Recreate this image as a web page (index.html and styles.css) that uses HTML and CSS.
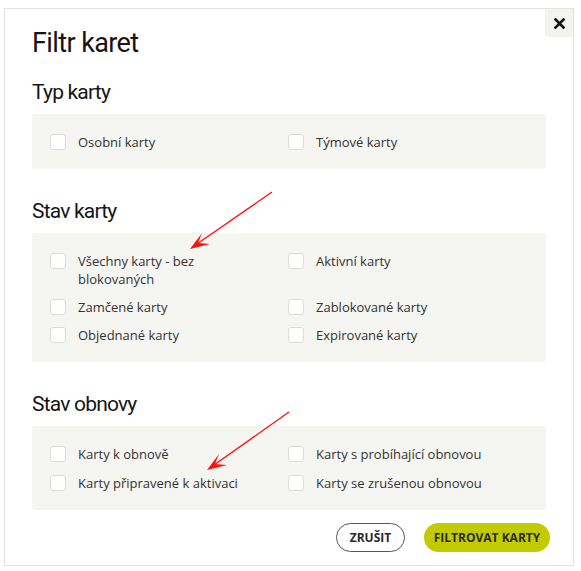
FILE: index.html
```html
<!DOCTYPE html>
<html lang="cs">
<head>
<meta charset="utf-8">
<title>Filtr karet</title>
<link rel="stylesheet" href="styles.css">
</head>
<body>
<div class="modal">
  <button class="close" aria-label="Zavřít">
    <svg width="11" height="11" viewBox="0 0 11 11"><path d="M1.5 1.5 L9.5 9.5 M9.5 1.5 L1.5 9.5" stroke="#111" stroke-width="2.6" stroke-linecap="square"/></svg>
  </button>
  <h1 class="title">Filtr karet</h1>

  <h2 class="section-title first">Typ karty</h2>
  <div class="panel">
    <label class="item"><span class="box"></span><span class="text">Osobní karty</span></label>
    <label class="item"><span class="box"></span><span class="text">Týmové karty</span></label>
  </div>

  <h2 class="section-title">Stav karty</h2>
  <div class="panel">
    <label class="item"><span class="box"></span><span class="text narrow">Všechny karty - bez blokovaných</span></label>
    <label class="item"><span class="box"></span><span class="text">Aktivní karty</span></label>
    <label class="item"><span class="box"></span><span class="text">Zamčené karty</span></label>
    <label class="item"><span class="box"></span><span class="text">Zablokované karty</span></label>
    <label class="item"><span class="box"></span><span class="text">Objednané karty</span></label>
    <label class="item"><span class="box"></span><span class="text">Expirované karty</span></label>
  </div>

  <h2 class="section-title">Stav obnovy</h2>
  <div class="panel panel-wide-gap">
    <label class="item"><span class="box"></span><span class="text">Karty k obnově</span></label>
    <label class="item"><span class="box"></span><span class="text">Karty s probíhající obnovou</span></label>
    <label class="item"><span class="box"></span><span class="text">Karty připravené k aktivaci</span></label>
    <label class="item"><span class="box"></span><span class="text">Karty se zrušenou obnovou</span></label>
  </div>

  <div class="actions">
    <button class="btn btn-outline">ZRUŠIT</button>
    <button class="btn btn-primary">FILTROVAT KARTY</button>
  </div>
</div>

<svg class="annotations" width="581" height="571" viewBox="0 0 581 571">
  <line x1="272" y1="192" x2="197" y2="244" stroke="#ff1010" stroke-width="1.4"/>
  <polygon points="190,249 202,233 198,243 210,244" fill="#ff1010"/>
  <line x1="289" y1="412" x2="214" y2="465" stroke="#ff1010" stroke-width="1.4"/>
  <polygon points="207,470 219,454 215,464 227,465" fill="#ff1010"/>
</svg>
</body>
</html>
```

FILE: styles.css
```css
* { box-sizing: border-box; }

html, body {
  margin: 0;
  padding: 0;
  background: #ffffff;
}

body {
  position: relative;
  width: 581px;
  height: 571px;
  overflow: hidden;
  font-family: "Open Sans", "Noto Sans", sans-serif;
  color: #333333;
}

.modal {
  position: relative;
  margin: 8px 0 0 4px;
  width: 570px;
  height: 558px;
  border: 1px solid #e2e2e2;
  padding: 17px 27px 12px 27px;
  background: #fff;
}

.close {
  position: absolute;
  top: 0;
  right: 0;
  width: 28px;
  height: 28px;
  border: 0;
  padding: 0;
  background: #f3f3ef;
  display: flex;
  align-items: center;
  justify-content: center;
}

.title {
  margin: 0;
  font-family: Roboto, "DejaVu Sans Condensed", sans-serif;
  font-weight: normal;
  font-size: 27px;
  letter-spacing: -0.6px;
  line-height: 34px;
  color: #151515;
}

.section-title {
  margin: 29px 0 9px;
  font-family: Roboto, "DejaVu Sans Condensed", sans-serif;
  font-weight: normal;
  font-size: 21px;
  letter-spacing: -0.8px;
  line-height: 26px;
  color: #151515;
}

.section-title.first {
  margin-top: 19px;
}

.panel {
  background: #f5f5f1;
  border-radius: 3px;
  padding: 19px 18px 18px;
  display: grid;
  grid-template-columns: 238px 1fr;
  row-gap: 10px;
}

.panel-wide-gap {
  row-gap: 11px;
}

.item {
  display: flex;
  align-items: flex-start;
  gap: 12px;
  font-size: 13px;
  line-height: 18px;
}

.box {
  flex: none;
  width: 16px;
  height: 16px;
  margin-top: 1px;
  background: #ffffff;
  border: 1px solid #dcdcd2;
  border-radius: 3px;
}

.text.narrow {
  max-width: 150px;
}

.actions {
  display: flex;
  justify-content: flex-end;
  gap: 19px;
  margin: 13px -4px 0 0;
}

.btn {
  height: 29px;
  border-radius: 15px;
  font-family: "Open Sans", sans-serif;
  font-weight: bold;
  font-size: 12px;
  color: #2a2a2a;
  padding: 0;
  white-space: nowrap;
}

.btn-outline {
  width: 69px;
  background: #fff;
  border: 1px solid #555;
}

.btn-primary {
  width: 126px;
  background: #c2cb00;
  border: 0;
}

.annotations {
  position: absolute;
  left: 0;
  top: 0;
  pointer-events: none;
}
```
